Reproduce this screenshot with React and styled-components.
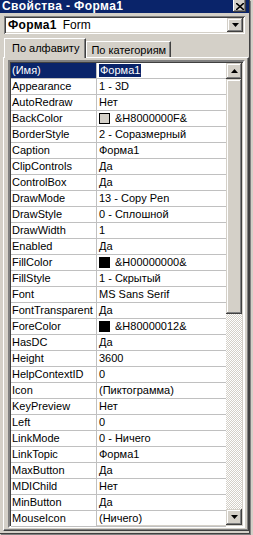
import React from "react";
import styled, { createGlobalStyle } from "styled-components";

const GlobalStyle = createGlobalStyle`
  body {
    margin: 0;
    background: #d4d0c8;
    font-family: "Liberation Sans", Arial, sans-serif;
    font-size: 11px;
  }
`;

const Window = styled.div`
  width: 253px;
  height: 535px;
  overflow: hidden;
  background: #d4d0c8;
  display: flex;
  flex-direction: column;
`;

const Body = styled.div`
  width: 250px;
  height: 534px;
  box-sizing: border-box;
  border-right: 1px solid #404040;
  border-bottom: 1px solid #404040;
  box-shadow: 1px 1px #808080;
  display: flex;
  flex-direction: column;
`;

const TitleBar = styled.div`
  height: 13px;
  background: #0a246a;
  display: flex;
  justify-content: space-between;
  align-items: flex-start;
  color: #fff;
  font-weight: bold;
  font-size: 12px;
  letter-spacing: 0.4px;
  line-height: 13px;
  padding-left: 2px;
  padding-right: 3px;
`;

const CloseButton = styled.div`
  width: 13px;
  height: 12px;
  box-sizing: border-box;
  background: #d4d0c8;
  box-shadow: inset -1px -1px #404040, inset 1px 0 #fff, inset -2px -2px #808080;
  display: flex;
  align-items: center;
  justify-content: center;
`;

const Combo = styled.div`
  margin: 3px 4px 0 4px;
  height: 18px;
  box-sizing: border-box;
  background: #fff;
  box-shadow: inset 1px 1px #808080, inset -1px -1px #fff, inset 2px 2px #404040,
    inset -2px -2px #d4d0c8;
  display: flex;
  align-items: center;
  padding: 2px 2px 2px 4px;
`;

const ComboText = styled.div`
  flex: 1;
  font-size: 12px;
  b {
    font-weight: bold;
    letter-spacing: 0.3px;
    margin-right: 6px;
  }
`;

const Raised = styled.div`
  width: ${(p) => p.$w || 16}px;
  height: ${(p) => p.$h || 16}px;
  box-sizing: border-box;
  background: #d4d0c8;
  box-shadow: inset -1px -1px #404040, inset 1px 1px #d4d0c8, inset -2px -2px #808080,
    inset 2px 2px #fff;
  display: flex;
  align-items: center;
  justify-content: center;
  flex-shrink: 0;
`;

const TabRow = styled.div`
  display: flex;
  align-items: flex-end;
  margin-top: 4px;
  padding-left: 4px;
  position: relative;
  z-index: 1;
`;

const Tab = styled.div`
  height: ${(p) => (p.$active ? 20 : 16)}px;
  box-sizing: border-box;
  padding: ${(p) => (p.$active ? "3px 6px 0 7px" : "2px 4px 0 4px")};
  margin-bottom: ${(p) => (p.$active ? -1 : 0)}px;
  background: #d4d0c8;
  border-top: 1px solid #fff;
  border-left: 1px solid #fff;
  border-right: 1px solid #404040;
  box-shadow: inset -1px 0 #808080;
  font-size: 11px;
  line-height: 13px;
  white-space: nowrap;
`;

const Panel = styled.div`
  margin-left: 3px;
  width: 246px;
  height: 474px;
  box-sizing: border-box;
  border-top: 1px solid #fff;
  border-left: 1px solid #fff;
  border-right: 1px solid #404040;
  border-bottom: 1px solid #404040;
  box-shadow: inset -1px -1px #808080;
  padding: 2px 2px 0 4px;
`;

const Grid = styled.div`
  width: 237px;
  height: 468px;
  box-sizing: border-box;
  border: 2px solid;
  border-color: #808080 #fff #fff #808080;
  box-shadow: inset 1px 1px #404040, inset -1px -1px #d4d0c8;
  padding: 1px;
  display: flex;
  background: #fff;
`;

const Rows = styled.div`
  flex: 1;
  display: flex;
  flex-direction: column;
`;

const Row = styled.div`
  display: grid;
  grid-template-columns: 86px 1fr;
  height: 16px;
  box-sizing: border-box;
  border-bottom: 1px solid #c0c0c0;
  line-height: 15px;
  font-size: 11px;
  color: #000;
`;

const Name = styled.div`
  padding-left: 1px;
  border-right: 1px solid #c0c0c0;
  background: ${(p) => (p.$selected ? "#0a246a" : "#fff")};
  color: ${(p) => (p.$selected ? "#fff" : "#000")};
  white-space: nowrap;
  overflow: hidden;
`;

const Value = styled.div`
  padding-left: 2px;
  display: flex;
  align-items: center;
  white-space: nowrap;
  overflow: hidden;
`;

const Selected = styled.span`
  background: #0a246a;
  color: #fff;
  padding: 0 1px;
  line-height: 13px;
`;

const Swatch = styled.span`
  width: 9px;
  height: 9px;
  border: 1px solid #000;
  background: ${(p) => p.$color};
  margin-right: 5px;
  flex-shrink: 0;
`;

const ScrollBar = styled.div`
  width: 16px;
  display: flex;
  flex-direction: column;
`;

const Track = styled.div`
  flex: 1;
  background-color: #fff;
  background-image: repeating-conic-gradient(#d4d0c8 0 25%, #fff 0 50%);
  background-size: 2px 2px;
`;

const Arrow = ({ down }) => (
  <svg width="7" height="4" viewBox="0 0 7 4">
    <path d={down ? "M0 0h7l-3.5 4z" : "M0 4h7l-3.5-4z"} fill="#000" />
  </svg>
);

const props = [
  ["(Имя)", "Форма1"],
  ["Appearance", "1 - 3D"],
  ["AutoRedraw", "Нет"],
  ["BackColor", "&H8000000F&", "#d4d0c8"],
  ["BorderStyle", "2 - Соразмерный"],
  ["Caption", "Форма1"],
  ["ClipControls", "Да"],
  ["ControlBox", "Да"],
  ["DrawMode", "13 - Copy Pen"],
  ["DrawStyle", "0 - Сплошной"],
  ["DrawWidth", "1"],
  ["Enabled", "Да"],
  ["FillColor", "&H00000000&", "#000"],
  ["FillStyle", "1 - Скрытый"],
  ["Font", "MS Sans Serif"],
  ["FontTransparent", "Да"],
  ["ForeColor", "&H80000012&", "#000"],
  ["HasDC", "Да"],
  ["Height", "3600"],
  ["HelpContextID", "0"],
  ["Icon", "(Пиктограмма)"],
  ["KeyPreview", "Нет"],
  ["Left", "0"],
  ["LinkMode", "0 - Ничего"],
  ["LinkTopic", "Форма1"],
  ["MaxButton", "Да"],
  ["MDIChild", "Нет"],
  ["MinButton", "Да"],
  ["MouseIcon", "(Ничего)"],
];

export default function App() {
  return (
    <Window>
      <GlobalStyle />
      <Body>
        <TitleBar>
          <span>Свойства - Форма1</span>
          <CloseButton>
            <svg width="8" height="7" viewBox="0 0 8 7">
              <path d="M0 0l8 7M8 0l-8 7" stroke="#000" strokeWidth="1.6" />
            </svg>
          </CloseButton>
        </TitleBar>
        <Combo>
          <ComboText>
            <b>Форма1</b>Form
          </ComboText>
          <Raised $w={16} $h={14}>
            <Arrow down />
          </Raised>
        </Combo>
        <TabRow>
          <Tab $active>По алфавиту</Tab>
          <Tab>По категориям</Tab>
        </TabRow>
        <Panel>
          <Grid>
            <Rows>
              {props.map(([name, value, color], i) => (
                <Row key={name}>
                  <Name $selected={i === 0}>{name}</Name>
                  <Value>
                    {color && <Swatch $color={color} />}
                    {i === 0 ? <Selected>{value}</Selected> : value}
                  </Value>
                </Row>
              ))}
            </Rows>
            <ScrollBar>
              <Raised>
                <Arrow />
              </Raised>
              <Raised $h={235} />
              <Track />
              <Raised>
                <Arrow down />
              </Raised>
            </ScrollBar>
          </Grid>
        </Panel>
      </Body>
    </Window>
  );
}
